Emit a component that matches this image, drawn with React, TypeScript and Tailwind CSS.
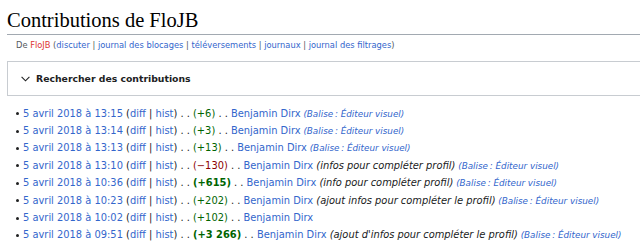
import React from "react";

type Row = {
  time: string;
  delta: string;
  kind: "pos" | "neg";
  bold?: boolean;
  comment?: string;
  tag?: boolean;
};

const rows: Row[] = [
  { time: "13:15", delta: "+6", kind: "pos", tag: true },
  { time: "13:14", delta: "+3", kind: "pos", tag: true },
  { time: "13:13", delta: "+13", kind: "pos", tag: true },
  { time: "13:10", delta: "\u2212130", kind: "neg", comment: "infos pour compléter profil", tag: true },
  { time: "10:36", delta: "+615", kind: "pos", bold: true, comment: "info pour compléter profil", tag: true },
  { time: "10:23", delta: "+202", kind: "pos", comment: "ajout infos pour compléter le profil", tag: true },
  { time: "10:02", delta: "+102", kind: "pos" },
  { time: "09:51", delta: "+3\u00a0266", kind: "pos", bold: true, comment: "ajout d'infos pour compléter le profil", tag: true },
];

const A = ({ children }: { children: React.ReactNode }) => (
  <span className="text-[#3366cc]">{children}</span>
);

export default function App() {
  return (
    <div
      className="w-[640px] h-[250px] overflow-hidden bg-white text-[#202122] pl-[7px] pt-[8px]"
      style={{ fontFamily: '"DejaVu Sans", sans-serif' }}
    >
      <h1
        className="w-[700px] text-[20.5px] leading-[24px] pb-[2px] border-b border-[#a2a9b1] text-[#000]"
        style={{ fontFamily: '"Liberation Serif", serif' }}
      >
        Contributions de FloJB
      </h1>
      <div className="mt-[4px] ml-[9px] text-[8.3px] leading-[12px] text-[#54595d] whitespace-nowrap">
        De <span className="text-[#dd3333]">FloJB</span> (<A>discuter</A> | <A>journal des blocages</A> |{" "}
        <A>téléversements</A> | <A>journaux</A> | <A>journal des filtrages</A>)
      </div>
      <div className="mt-[10px] w-[700px] h-[35px] border border-[#c8ccd1] flex items-center pl-[13px]">
        <svg width="9" height="6" viewBox="0 0 9 6" className="mr-[6px]">
          <polyline points="0.6,0.8 4.5,4.8 8.4,0.8" fill="none" stroke="#202122" strokeWidth="1.1" />
        </svg>
        <span className="text-[9.3px] font-bold text-[#202122]">Rechercher des contributions</span>
      </div>
      <ul className="mt-[9px] ml-[9px] text-[9.88px]">
        {rows.map((r, i) => (
          <li key={i} className="flex items-center h-[17.4px] leading-[14px] whitespace-nowrap">
            <span className="w-[3px] h-[3px] rounded-full bg-[#202122] mr-[4px] shrink-0" />
            <span>
              <A>5 avril 2018 à {r.time}</A> (<A>diff</A> | <A>hist</A>) . .{" "}
              <span
                className={
                  (r.kind === "pos" ? "text-[#006400]" : "text-[#8b0000]") + (r.bold ? " font-bold" : "")
                }
              >
                ({r.delta})
              </span>{" "}
              . . <A>Benjamin Dirx</A>
              {r.comment && <span className="italic text-[#202122]"> ({r.comment})</span>}
              {r.tag && (
                <span className="italic text-[8.8px] text-[#3366cc]">
                  {" "}
                  (Balise{"\u202f"}: Éditeur visuel)
                </span>
              )}
            </span>
          </li>
        ))}
      </ul>
    </div>
  );
}
